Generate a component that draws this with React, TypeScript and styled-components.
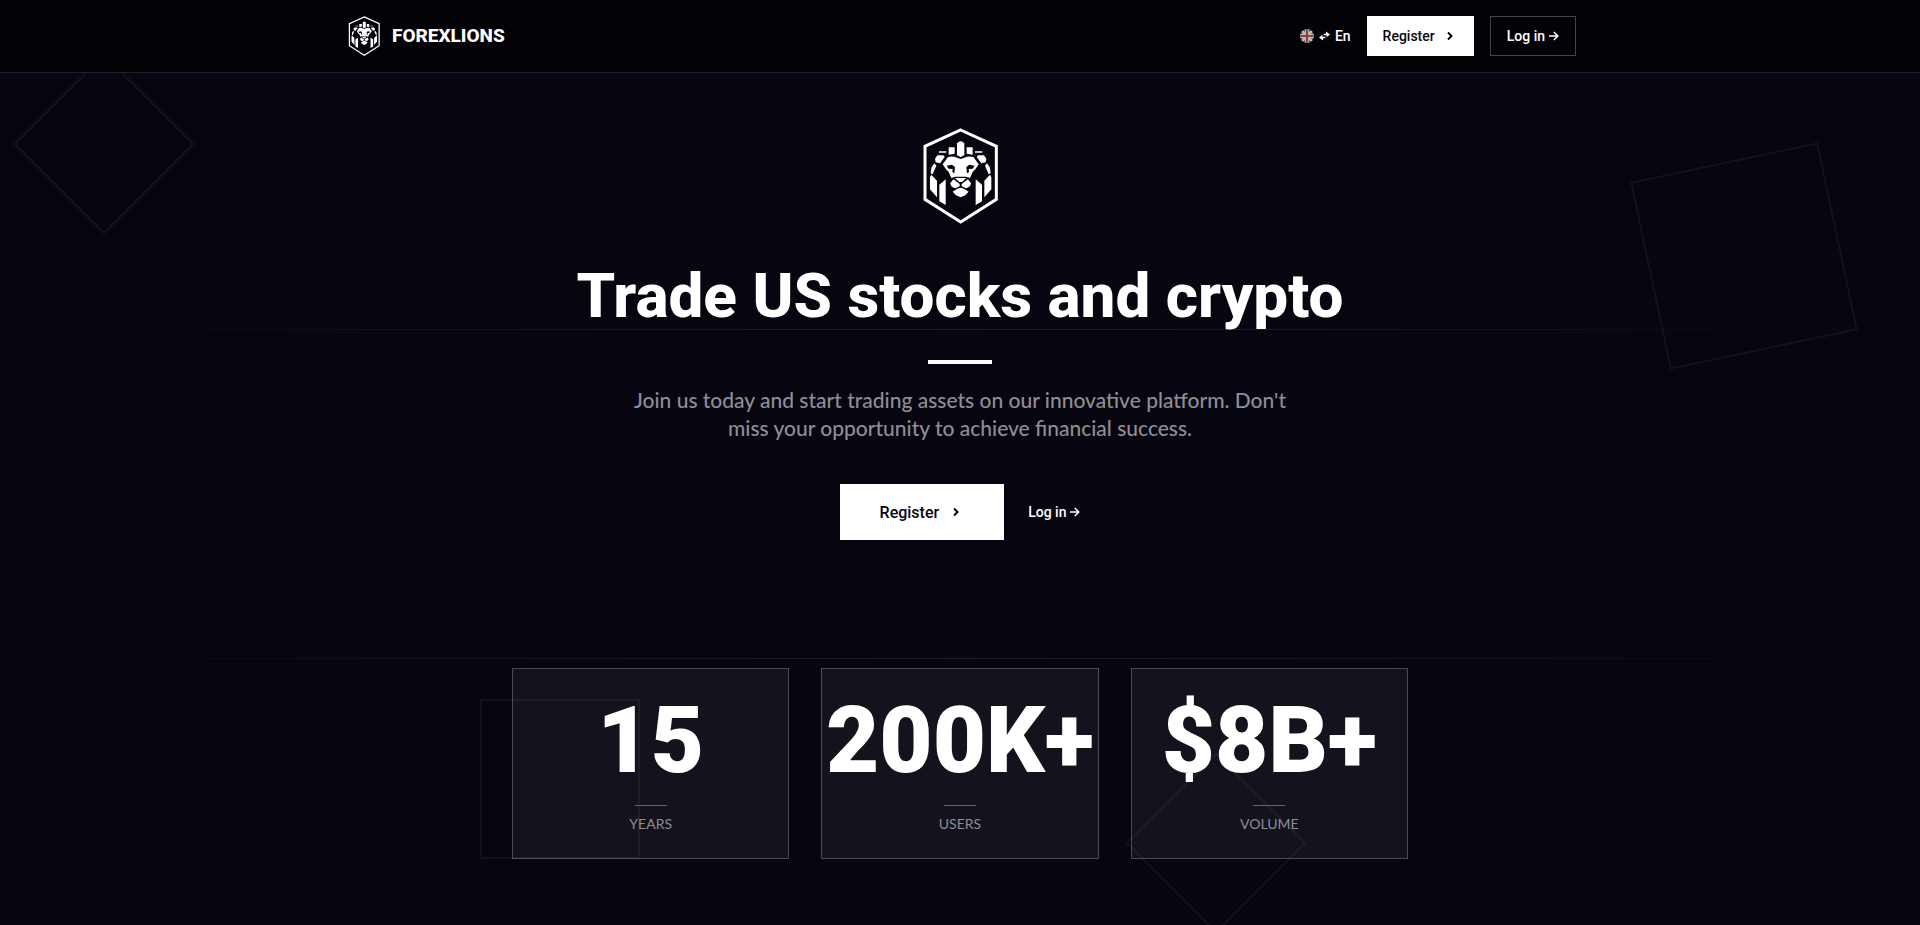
import React from "react";
import styled, { createGlobalStyle, css } from "styled-components";

const GlobalStyle = createGlobalStyle`
  *, *::before, *::after { box-sizing: border-box; }
  body {
    margin: 0;
    background: #07050f;
    color: #fff;
    font-family: Roboto, "Liberation Sans", sans-serif;
  }
  h1, p, dl, dt, dd { margin: 0; }
`;

const Page = styled.div`
  display: flex;
  flex-direction: column;
  min-height: 100vh;
`;

const Header = styled.header`
  background: #030207;
  border-bottom: 1px solid #201e26;
`;

const HeaderInner = styled.div`
  display: flex;
  align-items: center;
  justify-content: space-between;
  max-width: 1280px;
  height: 72px;
  margin: 0 auto;
  padding: 0 24px;
`;

const Brand = styled.a`
  display: flex;
  align-items: center;
  gap: 8px;
  color: #fff;
  font-size: 19px;
  font-weight: 800;
  line-height: 24px;
  text-decoration: none;
`;

const Nav = styled.nav`
  display: flex;
  align-items: center;
  gap: 16px;
`;

const LanguageButton = styled.button`
  display: flex;
  align-items: center;
  gap: 5px;
  padding: 0;
  border: 0;
  background: none;
  color: #fff;
  font: 500 14px/20px Roboto, "Liberation Sans", sans-serif;
  cursor: pointer;
`;

const RegisterLink = styled.a<{ $large?: boolean }>`
  display: inline-flex;
  align-items: center;
  gap: 7px;
  height: 40px;
  padding: 0 16px;
  background: #fff;
  color: #07050f;
  font-size: 14px;
  font-weight: 500;
  text-decoration: none;
  ${(p) =>
    p.$large &&
    css`
      gap: 9px;
      height: 56px;
      padding: 0 40px;
      font-size: 16px;
    `}
`;

const LoginLink = styled.a<{ $outlined?: boolean }>`
  display: inline-flex;
  align-items: center;
  gap: 3px;
  height: 40px;
  color: #fff;
  font-size: 14px;
  font-weight: 500;
  text-decoration: none;
  ${(p) =>
    p.$outlined &&
    css`
      padding: 0 16px;
      border: 1px solid #45434a;
    `}
`;

const Hero = styled.main`
  position: relative;
  flex: 1;
  overflow: hidden;
  padding: 55px 24px 64px;
`;

const Backdrop = styled.div`
  position: absolute;
  inset: 0;
`;

const Square = styled.span<{
  $size: number;
  $top: number;
  $left?: string;
  $right?: string;
  $turn?: number;
}>`
  position: absolute;
  top: ${(p) => p.$top}px;
  left: ${(p) => p.$left ?? "auto"};
  right: ${(p) => p.$right ?? "auto"};
  width: ${(p) => p.$size}px;
  height: ${(p) => p.$size}px;
  border: 2px solid rgba(255, 255, 255, 0.05);
  transform: rotate(${(p) => p.$turn ?? 0}deg);
`;

const Rule = styled.span<{ $top: number }>`
  position: absolute;
  top: ${(p) => p.$top}px;
  left: 0;
  right: 0;
  height: 1px;
  background: linear-gradient(
    to right,
    transparent,
    rgba(255, 255, 255, 0.1),
    transparent
  );
`;

const Intro = styled.section`
  position: relative;
  display: flex;
  flex-direction: column;
  align-items: center;
  text-align: center;
`;

const Title = styled.h1`
  margin-top: 32px;
  font-size: 62px;
  font-weight: 800;
  line-height: 80px;
`;

const Accent = styled.span`
  width: 64px;
  height: 4px;
  margin: 24px 0 22px;
  background: #fff;
`;

const Lead = styled.p`
  max-width: 672px;
  color: #8f8e93;
  font-family: Lato, "Liberation Sans", sans-serif;
  font-size: 21px;
  font-weight: 500;
  line-height: 28px;
`;

const Actions = styled.div`
  display: flex;
  align-items: center;
  gap: 24px;
  margin-top: 42px;
`;

const Stats = styled.dl`
  position: relative;
  display: grid;
  grid-template-columns: repeat(3, minmax(0, 1fr));
  gap: 32px;
  max-width: 896px;
  margin: 128px auto 0;
`;

const StatCard = styled.div`
  display: flex;
  flex-direction: column-reverse;
  align-items: center;
  padding: 24px 0;
  border: 1px solid rgba(255, 255, 255, 0.23);
  background: rgba(255, 255, 255, 0.055);
`;

const StatValue = styled.dd`
  font-size: 92px;
  font-weight: 900;
  line-height: 96px;
  white-space: nowrap;
`;

const StatLabel = styled.dt`
  display: flex;
  flex-direction: column;
  align-items: center;
  gap: 8px;
  margin-top: 16px;
  color: #8f8e93;
  font-family: Lato, "Liberation Sans", sans-serif;
  font-size: 14px;
  line-height: 20px;
  text-transform: uppercase;

  &::before {
    content: "";
    width: 32px;
    height: 1px;
    background: #66646c;
  }
`;

const LionMark = ({ size }: { size: number }) => (
  <svg width={size} height={size} viewBox="36 54 288 288" fill="#fff" aria-hidden="true">
    <path
      d="M182 60 289 109V268L182 336 75 268V109Z"
      fill="none"
      stroke="#fff"
      strokeWidth="9"
    />
    <path d="M171 100Q182 88 193 100V136L182 141 171 136Z" />
    <path d="M146 112H164V131L146 134Z M117 124H139V128H117Z" />
    <path d="M218 112H200V131L218 134Z M247 124H225V128H247Z" />
    <path d="M112 136H130L134 141 120 160 107 157 105 146Z M252 136H234L230 141 244 160 257 157 259 146Z" />
    <path d="M103 160 109 167 98 193 92 190 94 173Z M261 160 255 167 266 193 272 190 270 173Z" />
    <path d="M94 194 111 212V262L90 238V202Z M270 194 253 212V262L274 238V202Z" />
    <path d="M137 208V285L118 274V224Z M227 208V285L246 274V224Z" />
    <path d="M128 163 144 141Q158 137 171 143L182 147 193 143Q206 137 220 141L236 163 226 178 218 186 210 204 198 200H166L154 204 146 186 138 178Z" />
    <path
      d="M140 167 156 164 165 171 163 190 157 186 158 177 146 176Z M224 167 208 164 199 171 201 190 207 186 206 177 218 176Z"
      fill="#07050f"
    />
    <path d="M165 204H199L186 216H178Z" />
    <path d="M160 208 179 222V229L166 235Q152 232 151 220Z M204 208 185 222V229L198 235Q212 232 213 220Z" />
    <path d="M158 245 172 236 182 233 192 236 206 245 196 256 182 262 168 256Z" />
  </svg>
);

const Chevron = () => (
  <svg width="16" height="16" viewBox="0 0 16 16" fill="none" stroke="currentColor" strokeWidth="2" aria-hidden="true">
    <path d="M6 4.5 9.5 8 6 11.5" />
  </svg>
);

const Arrow = () => (
  <svg width="11" height="12" viewBox="0 0 11 12" fill="none" stroke="currentColor" strokeWidth="1.5" aria-hidden="true">
    <path d="M1 6H9.5M5.8 2 9.8 6 5.8 10" />
  </svg>
);

const SwapIcon = () => (
  <svg width="11" height="10" viewBox="0 0 11 10" fill="currentColor" aria-hidden="true">
    <path d="M7 0.6 11 3.4 7.6 6.2V4.3H4.6V3L7 2.5Z M4 9.4 0 6.6 3.4 3.8V5.7H6.4V7L4 7.5Z" />
  </svg>
);

const UkFlag = () => (
  <svg width="14" height="14" viewBox="0 0 14 14" opacity="0.8" aria-hidden="true">
    <clipPath id="flag-disc">
      <circle cx="7" cy="7" r="7" />
    </clipPath>
    <g clipPath="url(#flag-disc)">
      <path fill="#2d5089" d="M0 0H14V14H0Z" />
      <path stroke="#e8e8ea" strokeWidth="2.6" d="M0 0 14 14M14 0 0 14" />
      <path stroke="#f0f0f2" strokeWidth="4.4" d="M7 0V14M0 7H14" />
      <path stroke="#b5533c" strokeWidth="2.2" d="M7 0V14M0 7H14" />
    </g>
  </svg>
);

const stats = [
  { value: "15", label: "Years" },
  { value: "200K+", label: "Users" },
  { value: "$8B+", label: "Volume" },
];

export default function App() {
  return (
    <Page>
      <GlobalStyle />
      <Header>
        <HeaderInner>
          <Brand href="#">
            <LionMark size={40} />
            FOREXLIONS
          </Brand>
          <Nav>
            <LanguageButton type="button">
              <UkFlag />
              <SwapIcon />
              En
            </LanguageButton>
            <RegisterLink href="#register">
              Register
              <Chevron />
            </RegisterLink>
            <LoginLink href="#login" $outlined>
              Log in
              <Arrow />
            </LoginLink>
          </Nav>
        </HeaderInner>
      </Header>
      <Hero>
        <Backdrop aria-hidden="true">
          <Square $size={128} $top={7} $left="40px" $turn={45} />
          <Square $size={192} $top={87} $right="80px" $turn={-12} />
          <Square $size={160} $top={626} $left="25%" />
          <Square $size={128} $top={706} $right="33.33%" $turn={45} />
          <Rule $top={256} />
          <Rule $top={585} />
        </Backdrop>
        <Intro>
          <LionMark size={96} />
          <Title>Trade US stocks and crypto</Title>
          <Accent />
          <Lead>
            Join us today and start trading assets on our innovative platform.
            Don't miss your opportunity to achieve financial success.
          </Lead>
          <Actions>
            <RegisterLink href="#register" $large>
              Register
              <Chevron />
            </RegisterLink>
            <LoginLink href="#login">
              Log in
              <Arrow />
            </LoginLink>
          </Actions>
        </Intro>
        <Stats>
          {stats.map((s) => (
            <StatCard key={s.label}>
              <StatLabel>{s.label}</StatLabel>
              <StatValue>{s.value}</StatValue>
            </StatCard>
          ))}
        </Stats>
      </Hero>
    </Page>
  );
}
